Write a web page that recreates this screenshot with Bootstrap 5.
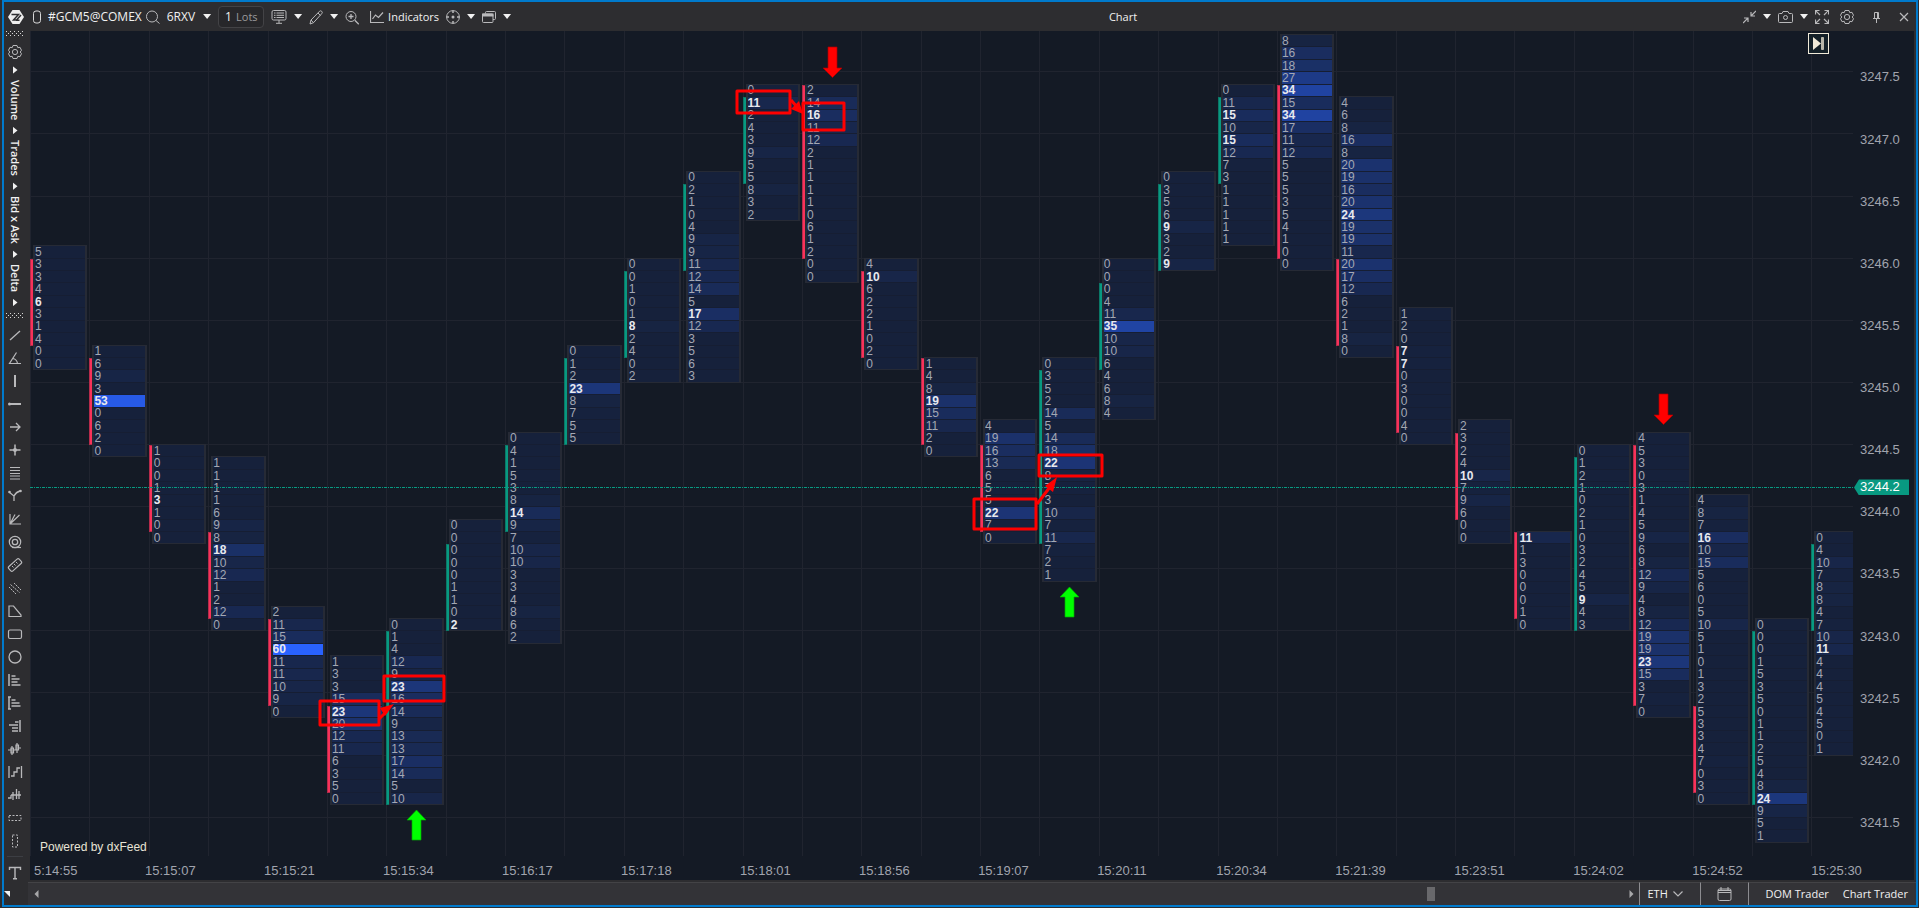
<!DOCTYPE html>
<html lang="en">
<head>
<meta charset="utf-8">
<meta name="viewport" content="width=device-width, initial-scale=1">
<title>Chart</title>
<link href="https://cdn.jsdelivr.net/npm/bootstrap@5.3.0/dist/css/bootstrap.min.css" rel="stylesheet">
<style>
  :root { --panel: #2d2d30; --chart: #141a25; --edge: #007acc; --up: #089981; --down: #f7325a; }
  body { background: var(--panel); color: #f1f1f1; font-family: "Open Sans", "Noto Sans", sans-serif; font-size: 11px; line-height: 16px; padding: 0 1px 1px 2px; overflow: hidden; }
  button { background: none; border: 0; padding: 0; color: inherit; display: flex; align-items: center; font-weight: 500; white-space: nowrap; }
  svg { display: block; flex: none; }
  .ico { fill: none; stroke: #b9b9bb; stroke-width: 1; }
  .ico .f { fill: #b9b9bb; stroke: none; }
  .frame { border: 2px solid var(--edge); }
  .topbar { height: 29px; gap: 7px; padding: 0 7px 0 4px; }
  .title { font-size: 11px; line-height: 16px; }
  .home { margin-right: 2px; }
  .ticker { font-size: 12px; margin-right: -3px; }
  .caret { width: 8px; height: 5px; background: #f1f1f1; clip-path: polygon(0 0, 100% 0, 50% 100%); }
  .lots { width: 46px; height: 22px; background: #27272a; border: 1px solid #434346; border-radius: 4px; padding: 0 5px; }
  .lots input { width: 12px; background: none; border: 0; padding: 0 0 0 1px; color: #f1f1f1; font-size: 12px; }
  .lots label { color: #9a9a9c; }
  .side { width: 26px; padding-right: 4px; }
  .grip { width: 18px; height: 6px; background: linear-gradient(#d8d8d8, #d8d8d8) 0 0 / 1px 1px, repeating-linear-gradient(90deg, #d8d8d8 0 1px, transparent 1px 4px) 0 0 / 100% 1px no-repeat, repeating-linear-gradient(90deg, transparent 0 2px, #d8d8d8 2px 3px, transparent 3px 4px) 0 2px / 100% 1px no-repeat, repeating-linear-gradient(90deg, #d8d8d8 0 1px, transparent 1px 4px) 0 4px / 100% 1px no-repeat; background-size: 0 0, 100% 1px, 100% 1px, 100% 1px; }
  .modes { gap: 6px; padding: 7px 0; }
  .vtext { writing-mode: vertical-rl; font-weight: 600; width: 16px; justify-content: center; }
  .vmark { width: 5px; height: 8px; background: #f1f1f1; clip-path: polygon(0 0, 100% 50%, 0 100%); }
  .tool { height: 23px; }
  .corner { width: 6px; height: 6px; background: #f1f1f1; clip-path: polygon(0 0, 100% 0, 100% 100%); }
  .chart { background: var(--chart); font-family: "Liberation Sans", Arial, sans-serif; margin-right: 2px; }
  .plot, .prices { display: grid; grid-template-rows: repeat(66, minmax(0, 1fr)); padding: 3px 0 2px; min-height: 0; }
  .plot { grid-template-columns: repeat(31, calc(100% / 30.7)); overflow: hidden; }
  .hline { grid-column: 1 / -1; border-top: 1px solid #20242f; }
  .vline { grid-row: 1 / -1; border-left: 1px solid #20242f; margin: -3px 0 -2px; }
  .candle { width: 4px; border: 1px solid; margin: 1px 0 -1px; }
  .up { background: var(--up); border-color: #0b7767; }
  .down { background: var(--down); border-color: #b52b4b; }
  .cluster { margin: 0 2px -1px 3px; border: solid #262a35; border-width: 1px 2px; overflow: hidden; background: #17223c; min-height: 0; z-index: 1; }
  .levels { height: calc(100% + 1px); }
  .level { flex: 1 1 0; min-height: 0; display: flex; align-items: center; border-bottom: 1px solid #161e33; color: #a4a8b3; font-size: 12px; line-height: 10px; }
  .poc { color: #e8e9ee; font-weight: 700; }
  .last { grid-column: 1 / -1; align-self: center; height: 1px; z-index: 2; background: repeating-linear-gradient(90deg, var(--up) 0 3px, transparent 3px 4px, var(--up) 4px 5px, transparent 5px 6px); }
  .marks { inset: 0; z-index: 3; }
  .powered { left: 10px; bottom: 1px; font-size: 12px; color: #e8e4d6; z-index: 2; }
  .prices { width: 61px; font-size: 13px; line-height: 16px; color: #a1a4ae; }
  .prices > * { align-self: center; padding-left: 7px; }
  .prices > .tag { background: var(--up); color: #fff; width: 55px; height: 16px; margin-left: 1px; padding-left: 6px; clip-path: polygon(0 50%, 5px 0, 100% 0, 100% 100%, 5px 100%); }
  .times { height: 24px; font-size: 13px; line-height: 16px; color: #a1a4ae; padding: 7px 61px 0 0; margin-left: -4px; }
  .times span { flex: 0 0 calc(200% / 30.7); }
  .times span:first-child { padding-left: 8px; }
  .tolatest { right: 85px; top: 2px; width: 21px; height: 21px; border: 1px solid #f0ead9; background: #142028; justify-content: center; z-index: 3; }
  .bottombar { height: 25px; border-top: 2px solid var(--panel); background: #333337; margin-left: -2px; }
  .bottombar > * { border-top: 1px solid #434346; }
  .scroller { padding: 0 5px 0 6px; }
  .thumb { width: 8px; height: 14px; background: #68686b; }
  .cell { border-left: 1px solid #8c8c90 !important; }
</style>
</head>
<body class="vh-100">
<div class="frame h-100 d-flex flex-column">
  <header class="topbar d-flex align-items-center flex-shrink-0">
    <button aria-label="Home" class="home"><svg width="16" height="16" viewBox="0 0 16 16"><path d="M4.500 1h7L16 8l-4.500 7h-7L0 8z" fill="#ededed"/><path d="M3.500 5.500h7L5.500 11h3l4.500-5M8 11.300h3.500" fill="none" stroke="#2d2d30" stroke-width="1.500"/></svg></button>
    <button aria-label="Link group"><svg width="8" height="16" viewBox="0 0 8 16" fill="none" stroke="#d8d8d8"><rect x=".5" y="2" width="7" height="12" rx="2.500"/></svg></button>
    <button class="ticker">#GCM5@COMEX</button>
    <button aria-label="Search"><svg class="ico" width="14" height="16" viewBox="0 0 14 16"><circle cx="6" cy="7.500" r="5.500"/><path d="M10 11.500l3.500 3"/></svg></button>
    <button class="ticker">6RXV</button>
    <button class="caret ms-1" aria-label="Symbols"></button>
    <div class="lots d-flex align-items-center"><input id="lots" value="1"><label for="lots">Lots</label></div>
    <button aria-label="Monitor"><svg class="ico" width="16" height="16" viewBox="0 0 16 16"><rect x="1" y="1.500" width="14" height="9.500" rx="1.500"/><path d="M3 4h1.500M5.500 4H13M3 6.300h1.500M5.500 6.300H13M3 8.500h1.500M5.500 8.500H13M8 11v3M5 14.300h6"/></svg></button>
    <button class="caret" aria-label="Monitor options"></button>
    <button aria-label="Draw"><svg class="ico" width="14" height="16" viewBox="0 0 14 16"><path d="M1 15l1-4L10.500 2.300q1-1 2.200 0t0 2.400L4.500 13.700zM9 4l2.500 2.500M2 11l2.500 2.700"/></svg></button>
    <button class="caret" aria-label="Draw options"></button>
    <button aria-label="Zoom in" class="me-1"><svg class="ico" width="14" height="16" viewBox="0 0 14 16"><circle cx="6" cy="7.500" r="5"/><path d="M9.800 11.300l4 4M3.500 7.500h5M6 5v5" stroke-width="1.300"/></svg></button>
    <button class="gap-1"><svg class="ico" width="14" height="16" viewBox="0 0 14 16"><path d="M.5 2v11.500H14M2.500 10l3-4 3 2.500L13 3.500" stroke-width="1.200"/></svg>Indicators</button>
    <button aria-label="Crosshair"><svg class="ico" width="14" height="16" viewBox="0 0 14 16"><circle cx="7" cy="8" r="6.400"/><path d="M7 1.500V4M7 12v2.500M.5 8H3M11 8h2.500" stroke-width="1.500"/><circle class="f" cx="7" cy="8" r="1.500"/></svg></button>
    <button class="caret" aria-label="Crosshair options"></button>
    <button aria-label="Windows"><svg class="ico" width="14" height="16" viewBox="0 0 14 16"><path d="M3.500 4.500v-1q0-1 1-1h8q1 0 1 1v6q0 1-1 1H11"/><rect x=".5" y="5" width="10.500" height="8.500" rx="1"/><path class="f" d="M0 4.500h11.500v3H0z"/></svg></button>
    <button class="caret" aria-label="Windows options"></button>
    <h1 class="title flex-grow-1 text-center m-0 pe-2 fw-medium">Chart</h1>
    <button aria-label="Collapse"><svg class="ico" width="13" height="16" viewBox="0 0 13 16"><path d="M13 2L8 7M8 3v4h4M0 14l5-5M1 9h4v4" stroke-width="1.200"/></svg></button>
    <button class="caret" aria-label="Collapse options"></button>
    <button aria-label="Screenshot"><svg class="ico" width="15" height="16" viewBox="0 0 15 16"><path d="M.5 5.500q0-1 1-1H4l1-2h5l1 2h2.500q1 0 1 1v7q0 1-1 1h-12q-1 0-1-1z"/><circle cx="7.500" cy="8.500" r="2"/></svg></button>
    <button class="caret" aria-label="Screenshot options"></button>
    <button aria-label="Full screen" class="me-1"><svg class="ico" width="14" height="16" viewBox="0 0 14 16"><path d="M5 6L.8 1.800M.5 5.500v-4h4M9 6l4.200-4.200M9.500 1.500h4v4M5 10L.8 14.200M.5 10.500v4h4M9 10l4.200 4.200M13.500 10.500v4h-4" stroke-width="1.200"/></svg></button>
    <button aria-label="Settings" class="me-2"><svg class="ico" width="14" height="16" viewBox="0 0 14 16"><path d="M5 1.500h4l.8 2.200 2.200-.4 1.500 3L12.200 8l1.300 1.700-1.500 3-2.200-.4L9 14.500H5l-.8-2.200-2.200.4-1.500-3L1.800 8 .5 6.300l1.500-3 2.200.4z"/><circle cx="7" cy="8" r="2.600"/></svg></button>
    <button aria-label="Pin" class="mx-1"><svg class="ico" width="7" height="16" viewBox="0 0 7 16"><path d="M1.500 9V3.500h4V9M0 9.500h7M3.500 9.500V14M4.500 4v5"/></svg></button>
    <button aria-label="Close" class="ms-2"><svg class="ico" width="10" height="16" viewBox="0 0 10 16"><path d="M1 4l8 8M9 4l-8 8" stroke-width="1.200"/></svg></button>
  </header>

  <div class="d-flex flex-grow-1" style="min-height:0">
    <nav class="side d-flex flex-column align-items-center flex-shrink-0">
      <div class="grip mb-2 flex-shrink-0"></div>
      <button aria-label="Cluster settings"><svg class="ico" width="14" height="14" viewBox="0 1 14 14"><path d="M5 1.500h4l.8 2.200 2.200-.4 1.500 3L12.200 8l1.300 1.700-1.500 3-2.200-.4L9 14.500H5l-.8-2.200-2.200.4-1.500-3L1.800 8 .5 6.300l1.500-3 2.200.4z"/><circle cx="7" cy="8" r="2.600"/></svg></button>
      <div id="modes" class="modes d-flex flex-column align-items-center"></div>
      <div class="grip flex-shrink-0"></div>
      <div id="tools" class="pt-1"></div>
      <hr class="w-75 m-0 mt-1 border-secondary">
      <button aria-label="Text" class="pt-2"><svg class="ico" width="14" height="16" viewBox="0 0 14 16"><path d="M1.500 5V2.500h11V5M7 2.500v11M5 13.800h4" stroke-width="1.400"/></svg></button>
      <div class="corner mt-auto mb-2 align-self-start"></div>
    </nav>

    <div class="flex-grow-1 d-flex flex-column" style="min-width:0">
      <main class="chart flex-grow-1 d-flex flex-column position-relative overflow-hidden">
        <div class="d-flex flex-grow-1" style="min-height:0">
          <div id="plot" class="plot flex-grow-1 position-relative">
            <svg class="marks position-absolute w-100 h-100" viewBox="0 0 1823 825" preserveAspectRatio="none">
              <g fill="none" stroke="#f00" stroke-width="3" stroke-linejoin="round">
                <rect x="707" y="60" width="53" height="22"/><rect x="773" y="72" width="41" height="27"/>
                <rect x="290" y="670" width="59" height="24"/><rect x="354" y="645" width="60" height="25"/>
                <rect x="944" y="468" width="62" height="30"/><rect x="1009" y="424" width="63" height="21"/>
                <path d="M761 69l6 7M349 688l8-8M1007 473l13-17"/>
              </g>
              <path fill="#f00" d="M773 83l-12-5 8-8zM364 673l-9 12-5-8zM1027 446l-12 9 8 6z"/>
              <path fill="#f00" stroke="#a00" stroke-width=".7" d="M798 16h9v21h5l-9.500 9.500L793 37h5zM1629 363h9v21h5l-9.500 9.500L1624 384h5z"/>
              <path fill="#0f0" stroke="#0a0" stroke-width=".7" d="M382 809h9v-20h5l-9.500-10L377 789h5zM1035 586h9v-20h5l-9.500-10L1030 566h5z"/>
            </svg>
            <div class="powered position-absolute">Powered by dxFeed</div>
          </div>
          <div id="prices" class="prices flex-shrink-0"></div>
        </div>
        <div id="times" class="times d-flex flex-shrink-0"></div>
        <button class="tolatest position-absolute" aria-label="Go to latest"><svg width="11" height="13" viewBox="0 0 11 13"><path d="M0 0v13l8-6.500z" fill="#f0ead9"/><path d="M8.500.5h2v12h-2z" fill="#b9b4a8" stroke="#f0ead9" stroke-width=".6"/></svg></button>
      </main>
      <footer class="bottombar d-flex flex-shrink-0">
        <div class="scroller flex-grow-1 d-flex align-items-center justify-content-between">
          <button aria-label="Scroll left"><svg width="5" height="8" viewBox="0 0 5 8"><path d="M4.500 0v8L.5 4z" fill="#a8a8aa"/></svg></button>
          <div class="flex-grow-1"><div class="thumb" style="margin-left:87.3%"></div></div>
          <button aria-label="Scroll right"><svg width="5" height="8" viewBox="0 0 5 8"><path d="M.5 0v8l4-4z" fill="#a8a8aa"/></svg></button>
        </div>
        <button class="cell px-2 gap-1" style="width:61px">ETH<svg class="ico" width="12" height="8" viewBox="0 0 12 8"><path d="M1.500 1.500L6 6l4.500-4.500" stroke-width="1.200"/></svg></button>
        <button class="cell justify-content-center" style="width:48px" aria-label="Calendar"><svg class="ico" width="15" height="16" viewBox="0 0 15 16"><rect x="1" y="3" width="13" height="11.500" rx="1.500"/><path d="M1 6.500h13M4 1v3.500M11 1v3.500M1 4.500h13"/></svg></button>
        <button class="cell" style="padding:0 14px 0 17px">DOM Trader</button>
        <button class="pe-2">Chart Trader</button>
      </footer>
    </div>
  </div>
</div>

<script src="https://cdn.jsdelivr.net/npm/bootstrap@5.3.0/dist/js/bootstrap.bundle.min.js"></script>
<script>
  // Each price step is one of 66 grid rows; row 0 is 3247.5, and three rows lie above it.
  const LEAD = 4, MAX = 60;
  // [first row, volumes per price (a star marks the largest), candle start row, candle end row, direction]
  const clusters = [
    [14, "5 3 3 4 6* 3 1 4 0 0", 15, 22, "down"],
    [22, "1 6 9 3 53* 0 6 2 0", 23, 30, "down"],
    [30, "1 0 0 1 3* 1 0 0", 30, 37, "down"],
    [31, "1 1 1 1 6 9 8 18* 10 12 1 2 12 0", 37, 44, "down"],
    [43, "2 11 15 60* 11 11 10 9 0", 44, 51, "down"],
    [47, "1 3 3 15 23* 20 12 11 6 3 5 0", 51, 58, "down"],
    [44, "0 1 4 12 9 23* 16 14 9 13 13 17 14 5 10", 45, 59, "up"],
    [36, "0 0 0 0 0 1 1 0 2*", 38, 45, "up"],
    [29, "0 4 1 5 3 8 14* 9 7 10 10 3 3 4 8 6 2", 30, 37, "up"],
    [22, "0 1 2 23* 8 7 5 5", 23, 30, "up"],
    [15, "0 0 1 0 1 8* 2 4 0 2", 16, 23, "up"],
    [8, "0 2 1 0 4 9 9 11 12 14 5 17* 12 3 5 6 3", 9, 16, "up"],
    [1, "0 11* 2 4 3 9 5 5 8 3 2", 2, 9, "up"],
    [1, "2 14 16* 11 12 2 1 1 1 1 0 6 1 2 0 0", 1, 15, "down"],
    [15, "4 10* 6 2 2 1 0 2 0", 16, 23, "down"],
    [23, "1 4 8 19* 15 11 2 0", 23, 30, "down"],
    [28, "4 19 16 13 6 5 5 22* 7 0", 30, 37, "down"],
    [23, "0 3 5 2 14 5 14 18 22* 8 7 3 10 7 11 7 2 1", 24, 38, "up"],
    [15, "0 0 0 4 11 35* 10 10 6 4 6 8 4", 17, 24, "up"],
    [8, "0 3 5 6 9* 3 2 9*", 9, 16, "up"],
    [1, "0 11 15* 10 15* 12 7 3 1 1 1 1 1", 2, 9, "up"],
    [-3, "8 16 18 27 34* 15 34* 17 11 12 5 5 5 3 5 4 1 0 0", 1, 15, "down"],
    [2, "4 6 8 16 8 20 19 16 20 24* 19 19 11 20 17 12 6 2 1 8 0", 15, 22, "down"],
    [19, "1 2 0 7* 7* 0 3 0 0 4 0", 22, 29, "down"],
    [28, "2 3 2 4 10* 7 9 6 0 0", 29, 36, "down"],
    [37, "11* 1 3 0 0 0 1 0", 37, 44, "down"],
    [30, "0 1 2 1 0 2 1 0 3 2 4 5 9* 4 3", 31, 45, "up"],
    [29, "4 5 3 0 3 1 4 5 9 6 8 12 9 4 8 12 19 19 23* 15 3 7 0", 30, 51, "down"],
    [34, "4 8 7 16* 10 15 5 6 0 5 10 5 1 0 1 3 2 5 3 3 4 7 0 3 0", 51, 58, "down"],
    [44, "0 0 0 1 5 3 5 0 1 1 2 5 4 8 24* 9 5 1", 45, 59, "up"],
    [37, "0 4 10 7 8 8 4 7 10 11* 4 4 4 5 4 5 0 1", 38, 45, "up"]
  ];
  const mix = v => {
    const a = Math.max(0.1, v / MAX), from = [20, 26, 37], to = [41, 98, 255];
    return `rgb(${from.map((c, i) => Math.round(c + (to[i] - c) * a)).join()})`;
  };
  let html = "";
  for (let r = 0; r <= 60; r += 5) html += `<div class="hline" style="grid-row:${r + LEAD}"></div>`;
  clusters.forEach((_, k) => html += `<div class="vline" style="grid-column:${k + 1}"></div>`);
  clusters.forEach(([top, text, a, b, dir], k) => {
    const vols = text.split(" ");
    html += `<div class="candle ${dir}" style="grid-column:${k + 1};grid-row:${a + LEAD} / ${b + LEAD}"></div>`;
    html += `<div class="cluster" style="grid-column:${k + 1};grid-row:${top + LEAD} / span ${vols.length}"><div class="levels d-flex flex-column">` +
      vols.map(v => `<div class="level${v.endsWith("*") ? " poc" : ""}" style="background:${mix(parseInt(v))}">${parseInt(v)}</div>`).join("") + `</div></div>`;
  });
  html += `<div class="last" style="grid-row:${33 + LEAD}"></div>`;
  document.getElementById("plot").insertAdjacentHTML("afterbegin", html);

  let axis = "";
  for (let r = 0; r <= 60; r += 5) axis += `<div style="grid-row:${r + LEAD};grid-column:1">${(3247.5 - r / 10).toFixed(1)}</div>`;
  axis += `<div class="tag" style="grid-row:${33 + LEAD};grid-column:1">3244.2</div>`;
  document.getElementById("prices").innerHTML = axis;

  document.getElementById("times").innerHTML =
    "5:14:55 15:15:07 15:15:21 15:15:34 15:16:17 15:17:18 15:18:01 15:18:56 15:19:07 15:20:11 15:20:34 15:21:39 15:23:51 15:24:02 15:24:52 15:25:30"
      .split(" ").map(t => `<span>${t}</span>`).join("");

  document.getElementById("modes").innerHTML = `<i class="vmark"></i>` +
    ["Volume", "Trades", "Bid x Ask", "Delta"].map(m => `<button class="vtext">${m}</button><i class="vmark"></i>`).join("");

  const tools = [
    ["Line", `<path d="M3 13L13 4" stroke-width="1.300"/>`],
    ["Angle", `<path d="M14 13.500H2.500L9.500 2.500M6 8.500q4 1 4.500 5" stroke-width="1.200"/>`],
    ["Vertical line", `<path d="M8 2v12" stroke-width="2"/>`],
    ["Ray", `<path d="M2 8h12" stroke-width="2"/><circle class="f" cx="2.500" cy="8" r="1.500"/>`],
    ["Arrow", `<path d="M3 8h10M9 4l4 4-4 4" stroke-width="1.300"/>`],
    ["Cross", `<path d="M8 2.500v11M2.500 8h11" stroke-width="1.500"/><circle class="f" cx="8" cy="8" r="2"/>`],
    ["Fibonacci levels", `<path d="M3 2.500h10M3 5.500h10M3 8.500h10M3 11h10M3 14h10"/>`],
    ["Pitchfork", `<path d="M2 4l5 4v5M7 8q2-4 6-5" stroke-width="1.300"/><circle class="f" cx="2.500" cy="4" r="1.300"/><circle class="f" cx="13.500" cy="3" r="1.300"/>`],
    ["Fan", `<path d="M3 3v10h11M3 13l9.500-9M3 13L8 3.500" stroke-width="1.200"/>`],
    ["Spiral", `<circle cx="8" cy="8" r="5.700" stroke-width="1.200"/><circle cx="8" cy="8" r="2.700" stroke-width="1.300"/><path d="M5 13.500h9" stroke-width="1.200"/>`],
    ["Ruler", `<rect x="1" y="5" width="14" height="6" rx="1.500" transform="rotate(-42 8 8)" stroke-width="1.200"/><path d="M5 9l1.500 1.500M7 7l1.500 1.500M9 5l1.500 1.500"/>`],
    ["Channel", `<path d="M2 7l7 7M3.500 4.500l9 8M7 3l7 7" stroke-dasharray="2 .8"/>`],
    ["Triangle", `<path d="M2 13.500V3h4.500L14 12v1.500z" stroke-width="1.200"/>`],
    ["Rectangle", `<rect x="1.500" y="4" width="13" height="8.500" rx="1.500" stroke-width="1.200"/>`],
    ["Ellipse", `<circle cx="8" cy="8" r="6" stroke-width="1.300"/>`],
    ["Profile", `<path d="M2 2v12" stroke-width="1.500"/><path d="M4.500 4h4M4.500 7h8M4.500 10h6M4.500 13h9" stroke-width="1.400"/>`],
    ["Fixed profile", `<path d="M2 2v12M1 2h3M1 14h3" stroke-width="1.500"/><path d="M4.500 5h4M4.500 8h8M4.500 11h9" stroke-width="1.400"/>`],
    ["Right profile", `<path d="M13 2v12" stroke-width="1.500"/><path d="M8 4h3.500M2 7h9M5 10h6M5 13h6" stroke-width="1.400"/>`],
    ["Candles", `<path d="M1 9h3M5 5v9M10 2v10" stroke-width="1.200"/><path d="M4 7h2.500v5H4zM9 4h2.500v5H9zM7 9h2M12 7h2" stroke-width="1.200"/>`],
    ["Steps", `<path d="M2 2v12M14.500 2v12M4 12h3V8h3V4h3" stroke-width="1.300"/>`],
    ["Bars", `<path d="M1 11h3V8M6 5v8M4 8h3M9.500 2v10M7 8h7M12 4v8" stroke-width="1.300"/>`],
    ["Horizontal range", `<rect x="2" y="5.500" width="12" height="5" stroke-dasharray="2 1.500"/>`],
    ["Vertical range", `<rect x="5.500" y="2" width="5" height="12" stroke-dasharray="2 1.500"/>`]
  ];
  document.getElementById("tools").innerHTML = tools.map(([name, art]) =>
    `<button class="tool" aria-label="${name}"><svg class="ico" width="16" height="16" viewBox="0 0 16 16">${art}</svg></button>`).join("");
</script>
</body>
</html>
